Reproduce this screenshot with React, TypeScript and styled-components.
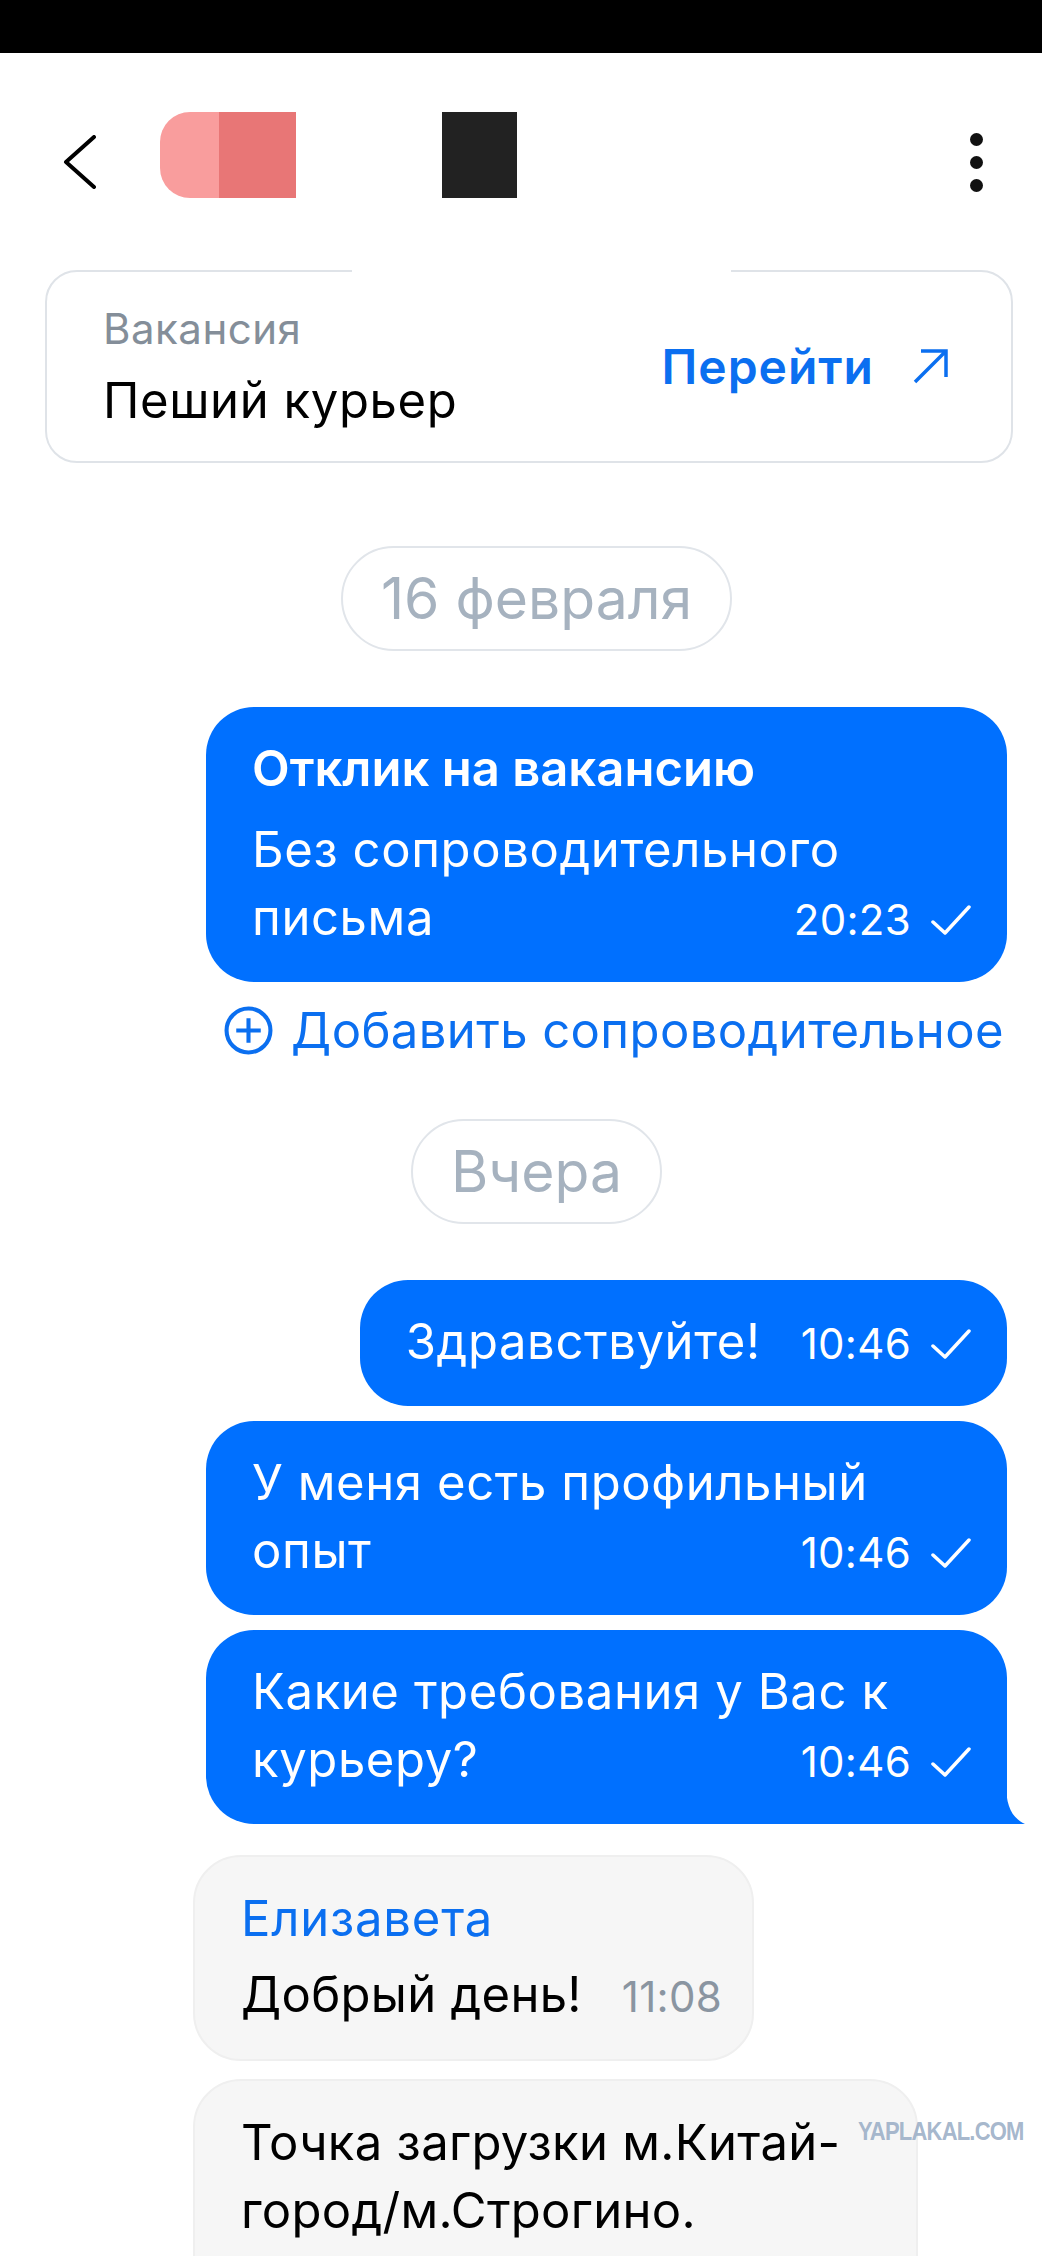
import React from "react";
import styled, { createGlobalStyle } from "styled-components";

const GlobalStyle = createGlobalStyle`
	html, body {
		margin: 0;
		padding: 0;
		background: #fff;
	}
	body {
		font-family: Inter, "Noto Sans", sans-serif;
		color: #000;
	}
	* {
		box-sizing: border-box;
	}
`;

const BLUE = "#0070ff";
const LINK = "#0b6ff0";

const Screen = styled.div`
	position: relative;
	width: 1042px;
	height: 2256px;
	overflow: hidden;
	background: #fff;
`;

const StatusBar = styled.div`
	height: 53px;
	background: #000;
`;

const Header = styled.div`
	display: flex;
	align-items: center;
	height: 100px;
	margin-top: 59px;
	padding: 0 59px 0 63px;
`;

const BackIcon = styled.svg`
	width: 34px;
	height: 54px;
	flex-shrink: 0;
`;

const Redacted = styled.div<{ $w: number; $bg: string; $round?: boolean }>`
	align-self: flex-start;
	width: ${(p) => p.$w}px;
	height: 86px;
	margin-left: ${(p) => (p.$round ? 63 : 146)}px;
	background: ${(p) => p.$bg};
	border-radius: ${(p) => (p.$round ? "30px 0 0 30px" : "0")};
`;

const Spacer = styled.div`
	flex: 1;
`;

const Dots = styled.div`
	display: flex;
	flex-direction: column;
	gap: 10px;
`;

const Dot = styled.span`
	width: 13px;
	height: 13px;
	border-radius: 50%;
	background: #111;
`;

const VacancyCard = styled.div`
	position: relative;
	display: flex;
	align-items: center;
	justify-content: space-between;
	height: 193px;
	margin: 58px 29px 0 45px;
	padding: 0 63px 0 56px;
	border: 2px solid #dfe3e8;
	border-radius: 32px;
`;

const BorderPatch = styled.div`
	position: absolute;
	top: -3px;
	left: 305px;
	width: 379px;
	height: 5px;
	background: #fff;
`;

const CardText = styled.div`
	display: flex;
	flex-direction: column;
`;

const CardLabel = styled.div`
	font-size: 42px;
	line-height: 50px;
	letter-spacing: 0.5px;
	color: #848e99;
`;

const CardTitle = styled.div`
	margin-top: 18px;
	font-size: 49px;
	line-height: 58px;
	letter-spacing: 0.6px;
	color: #000;
`;

const GoLink = styled.div`
	display: flex;
	align-items: center;
	gap: 38px;
	font-size: 48px;
	font-weight: 600;
	letter-spacing: 1px;
	color: ${LINK};
`;

const Chat = styled.div`
	display: flex;
	flex-direction: column;
	padding: 0 35px 0 66px;
`;

const DatePill = styled.div<{ $top: number }>`
	align-self: center;
	display: flex;
	align-items: center;
	height: 105px;
	margin-top: ${(p) => p.$top}px;
	padding: 0 38px;
	border: 2px solid #e1e5ea;
	border-radius: 60px;
	font-size: 57px;
	color: #a6b2bf;
`;

const Bubble = styled.div<{ $out?: boolean; $width?: number; $top: number; $tail?: boolean }>`
	position: relative;
	align-self: ${(p) => (p.$out ? "flex-end" : "flex-start")};
	width: ${(p) => (p.$width ? `${p.$width}px` : "auto")};
	margin-top: ${(p) => p.$top}px;
	margin-left: ${(p) => (p.$out ? 0 : 127)}px;
	padding: 28px ${(p) => (p.$out ? 36 : 30)}px 28px 46px;
	border-radius: ${(p) => (p.$tail ? "48px 48px 0 48px" : "48px")};
	background: ${(p) => (p.$out ? BLUE : "#f6f6f6")};
	border: ${(p) => (p.$out ? "none" : "2px solid #efefef")};
	color: ${(p) => (p.$out ? "#fff" : "#000")};
	font-size: 49px;
	line-height: 68px;
	letter-spacing: ${(p) => (p.$out ? 0.6 : 0.3)}px;
`;

const Tail = styled.svg`
	position: absolute;
	right: -18px;
	bottom: 0;
	width: 19px;
	height: 40px;
`;

const BubbleTitle = styled.div`
	margin-bottom: 13px;
	font-weight: 600;
	letter-spacing: 0;
`;

const Sender = styled.div`
	margin-bottom: 8px;
	font-size: 49px;
	letter-spacing: 0.8px;
	color: ${LINK};
`;

const LastRow = styled.div`
	display: flex;
	align-items: baseline;
	justify-content: space-between;
	gap: 40px;
`;

const Meta = styled.span<{ $out?: boolean }>`
	display: inline-flex;
	align-items: center;
	gap: 20px;
	font-size: 42px;
	letter-spacing: 0.3px;
	color: ${(p) => (p.$out ? "#fff" : "#8a95a1")};
`;

const CheckIcon = styled.svg`
	width: 40px;
	height: 32px;
`;

const AddRow = styled.div`
	align-self: flex-end;
	display: flex;
	align-items: center;
	gap: 18px;
	height: 49px;
	margin: 24px 3px 0 0;
	font-size: 49px;
	letter-spacing: 0.4px;
	color: ${LINK};
`;

const Watermark = styled.div`
	position: absolute;
	left: 858px;
	top: 2119px;
	font-family: "Liberation Sans", Arial, sans-serif;
	font-weight: 700;
	font-size: 22px;
	letter-spacing: -0.8px;
	transform: scaleY(1.15);
	color: rgba(155, 174, 198, 0.9);
`;

const Check = () => (
	<CheckIcon viewBox="0 0 40 32" fill="none">
		<path d="M2 18 L14 29 L38 3" stroke="#fff" strokeWidth="3.5" strokeLinecap="round" strokeLinejoin="round" />
	</CheckIcon>
);

type MsgProps = {
	out?: boolean;
	lines: string[];
	time: string;
	top: number;
	width?: number;
	title?: string;
	sender?: string;
	tail?: boolean;
};

const Message = ({ out, lines, time, top, width, title, sender, tail }: MsgProps) => {
	const head = lines.slice(0, -1);
	const last = lines[lines.length - 1];
	return (
		<Bubble $out={out} $top={top} $width={width} $tail={tail}>
			{sender && <Sender>{sender}</Sender>}
			{title && <BubbleTitle>{title}</BubbleTitle>}
			{head.map((l) => (
				<div key={l}>{l}</div>
			))}
			<LastRow>
				<span>{last}</span>
				{time && (
					<Meta $out={out}>
						{time}
						{out && <Check />}
					</Meta>
				)}
			</LastRow>
			{tail && (
				<Tail viewBox="0 0 19 40">
					<path d="M0 0 C0 22 6 34 19 40 L0 40 Z" fill={BLUE} />
				</Tail>
			)}
		</Bubble>
	);
};

export default function App() {
	return (
		<Screen>
			<GlobalStyle />
			<StatusBar />
			<Header>
				<BackIcon viewBox="0 0 34 54" fill="none">
					<path d="M31 2 L3 27 L31 52" stroke="#000" strokeWidth="4" strokeLinecap="round" strokeLinejoin="round" />
				</BackIcon>
				<Redacted $round $w={136} $bg="linear-gradient(90deg, #f99d9d 0 59px, #e87676 59px)" />
				<Redacted $w={75} $bg="#222" />
				<Spacer />
				<Dots>
					<Dot />
					<Dot />
					<Dot />
				</Dots>
			</Header>

			<VacancyCard>
				<BorderPatch />
				<CardText>
					<CardLabel>Вакансия</CardLabel>
					<CardTitle>Пеший курьер</CardTitle>
				</CardText>
				<GoLink>
					Перейти
					<svg width="36" height="36" viewBox="0 0 36 36" fill="none">
						<path d="M9 2 H34 V28 M34 2 L3 33" stroke={LINK} strokeWidth="3.5" />
					</svg>
				</GoLink>
			</VacancyCard>

			<Chat>
				<DatePill $top={83}>16 февраля</DatePill>
				<Message
					out
					top={56}
					width={801}
					title="Отклик на вакансию"
					lines={["Без сопроводительного", "письма"]}
					time="20:23"
				/>
				<AddRow>
					<svg width="49" height="49" viewBox="0 0 48 48" fill="none">
						<circle cx="24" cy="24" r="21.5" stroke={LINK} strokeWidth="4" />
						<path d="M24 12 V36 M12 24 H36" stroke={LINK} strokeWidth="4" />
					</svg>
					Добавить сопроводительное
				</AddRow>

				<DatePill $top={64}>Вчера</DatePill>
				<Message out top={56} lines={["Здравствуйте!"]} time="10:46" />
				<Message out top={15} width={801} lines={["У меня есть профильный", "опыт"]} time="10:46" />
				<Message out tail top={15} width={801} lines={["Какие требования у Вас к", "курьеру?"]} time="10:46" />

				<Message top={31} sender="Елизавета" lines={["Добрый день!"]} time="11:08" />
				<Message
					top={18}
					width={725}
					lines={["Точка загрузки м.Китай-", "город/м.Строгино.", "Смена ежедневно"]}
					time=""
				/>
			</Chat>

			<Watermark>YAPLAKAL.COM</Watermark>
		</Screen>
	);
}
